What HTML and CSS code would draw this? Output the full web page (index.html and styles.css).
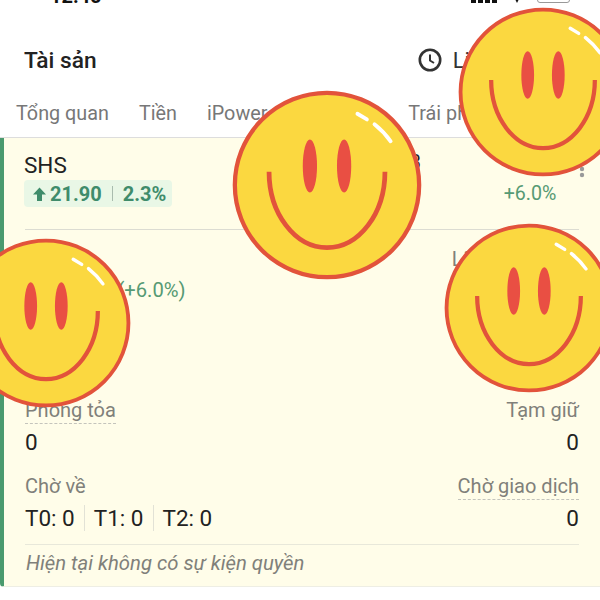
FILE: index.html
```html
<!DOCTYPE html>
<html lang="vi">
<head>
    <meta charset="UTF-8">
    <meta name="viewport" content="width=device-width, initial-scale=1.0">
    <title>Tài sản</title>
    <link rel="stylesheet" href="styles.css">
</head>
<body>
    <svg class="defs" width="0" height="0">
        <symbol id="smiley" viewBox="-100 -100 200 200">
            <circle r="97" fill="#fbd840" stroke="#e2533b" stroke-width="4.5"/>
            <ellipse cx="-18" cy="-20" rx="7.5" ry="28" fill="#e94f43"/>
            <ellipse cx="18" cy="-20" rx="7.5" ry="28" fill="#e94f43"/>
            <path d="M-61 -14 A61 80 0 0 0 61 -14" fill="none" stroke="#e2533b" stroke-width="5"/>
            <path d="M32 -75 L42 -69" stroke="#fff" stroke-width="4" stroke-linecap="round"/>
            <path d="M50 -64 Q60 -56 67 -46" fill="none" stroke="#fff" stroke-width="4" stroke-linecap="round"/>
        </symbol>
    </svg>

    <div class="screen">
        <div class="status-bar">
            <span class="clock">12:45</span>
            <div class="status-icons">
                <div class="signal"><i></i><i></i><i></i><i></i></div>
                <span class="wifi"></span>
                <span class="battery"></span>
            </div>
        </div>

        <header class="header">
            <h1>Tài sản</h1>
            <div class="history">
                <svg width="26" height="26" viewBox="0 0 26 26">
                    <circle cx="13" cy="13" r="10.2" fill="none" stroke="#333" stroke-width="2.6"/>
                    <path d="M13 7.5V13.5L17 16" fill="none" stroke="#333" stroke-width="2"/>
                </svg>
                <span>Lịch sử</span>
            </div>
        </header>

        <nav class="tabs">
            <span>Tổng quan</span>
            <span>Tiền</span>
            <span>iPower</span>
            <span>Phái sinh</span>
            <span>Trái phiếu</span>
        </nav>

        <section class="card">
            <div class="stock">
                <div class="stock-info">
                    <div class="symbol">SHS</div>
                    <div class="badge">
                        <svg width="13" height="14" viewBox="0 0 13 14">
                            <path d="M6.5 0.5L13 7.5H9V14H4V7.5H0Z" fill="#3f8c6b"/>
                        </svg>
                        <span>21.90</span>
                        <span class="badge-sep"></span>
                        <span>2.3%</span>
                    </div>
                </div>
                <div class="stock-qty">1,203</div>
                <div class="stock-price">
                    <div>23.2</div>
                    <div class="gain">+6.0%</div>
                </div>
                <svg class="kebab" width="6" height="18" viewBox="0 0 6 18">
                    <circle cx="3" cy="3" r="2.2" fill="#999"/>
                    <circle cx="3" cy="9" r="2.2" fill="#999"/>
                    <circle cx="3" cy="15" r="2.2" fill="#999"/>
                </svg>
            </div>

            <div class="row row-total">
                <div>
                    <div class="label">Tổng</div>
                    <div class="value">1,203,000 <span class="gain">(+6.0%)</span></div>
                </div>
                <div class="right">
                    <div class="label label-tight">Lãi/lỗ tạm tính</div>
                    <div class="value">+1,560</div>
                </div>
            </div>

            <div class="row row-blocked">
                <div>
                    <div class="label"><span class="dashed">Phong tỏa</span></div>
                    <div class="value value-gap">0</div>
                </div>
                <div class="right">
                    <div class="label">Tạm giữ</div>
                    <div class="value value-gap">0</div>
                </div>
            </div>

            <div class="row row-pending">
                <div>
                    <div class="label">Chờ về</div>
                    <div class="value value-gap settle">
                        <span>T0: 0</span><span>T1: 0</span><span>T2: 0</span>
                    </div>
                </div>
                <div class="right">
                    <div class="label"><span class="dashed">Chờ giao dịch</span></div>
                    <div class="value value-gap">0</div>
                </div>
            </div>

            <div class="note">Hiện tại không có sự kiện quyền</div>
        </section>
    </div>

    <svg class="smiley smiley-main"><use href="#smiley"/></svg>
    <svg class="smiley smiley-top"><use href="#smiley"/></svg>
    <svg class="smiley smiley-right"><use href="#smiley"/></svg>
    <svg class="smiley smiley-left"><use href="#smiley"/></svg>
</body>
</html>
```
FILE: styles.css
```css
html, body {
    margin: 0;
    height: 600px;
    overflow: hidden;
    background: white;
}

body {
    position: relative;
    font-family: Roboto, "Noto Sans", sans-serif;
    color: #222;
}

.defs {
    position: absolute;
}

.status-bar {
    height: 4px;
    overflow: hidden;
    display: flex;
    justify-content: space-between;
    align-items: flex-end;
    padding: 0 30px 0 50px;
}

.clock {
    font-size: 20px;
    font-weight: 700;
    line-height: 15px;
    color: #111;
}

.status-icons {
    display: flex;
    align-items: flex-end;
    gap: 16px;
}

.signal {
    display: flex;
    align-items: flex-end;
    gap: 2px;
    margin-bottom: 1px;
}

.signal i {
    display: block;
    width: 5px;
    height: 12px;
    background: #111;
}

.wifi {
    width: 8px;
    height: 8px;
    margin-bottom: 1px;
    background: #111;
    clip-path: polygon(0 0, 100% 0, 50% 100%);
}

.battery {
    width: 31px;
    height: 12px;
    border: 1px solid #999;
    border-radius: 3px;
    margin-bottom: 1px;
}

.header {
    margin-top: 20px;
    height: 72px;
    display: flex;
    align-items: center;
    justify-content: space-between;
    padding: 0 24px;
}

h1 {
    margin: 0;
    font-size: 22.7px;
    font-weight: 500;
    color: #222;
}

.history {
    display: flex;
    align-items: center;
    gap: 10px;
    font-size: 22px;
    color: #333;
    margin-right: 52px;
}

.tabs {
    display: flex;
    gap: 30px;
    height: 36px;
    padding: 0 16px 5px;
    font-size: 19.8px;
    line-height: 36px;
    color: #777;
    white-space: nowrap;
    overflow: hidden;
    border-bottom: 1px solid #ddd;
}

.card {
    height: 449px;
    box-sizing: border-box;
    background: #fffde9;
    border-left: 4px solid #4a9a6e;
    border-bottom: 1px solid #eeeee4;
    border-radius: 0 0 0 4px;
    padding: 0 21px;
}

.stock {
    display: grid;
    grid-template-columns: 1fr 120px 158px;
    height: 92px;
    box-sizing: border-box;
    padding-top: 15px;
    border-bottom: 1px solid #dcdcd2;
    position: relative;
}

.symbol {
    font-size: 22.5px;
    line-height: 24px;
    margin-left: -1px;
}

.badge {
    display: inline-flex;
    align-items: center;
    height: 27px;
    margin: 3px 0 0 -1px;
    padding: 0 6px 0 9px;
    background: #e9f7e6;
    border-radius: 4px;
    font-size: 20px;
    font-weight: 700;
    color: #3f8c6b;
}

.badge svg {
    margin-right: 4px;
}

.badge-sep {
    width: 1px;
    height: 15px;
    margin: 0 10px;
    background: #a9bcae;
}

.stock-qty {
    margin-top: -2px;
    font-size: 19.6px;
    line-height: 24px;
    text-align: right;
}

.stock-price {
    margin-top: -2px;
    text-align: center;
    font-size: 19.6px;
    line-height: 24px;
    padding-left: 60px;
}

.stock-price .gain {
    margin-top: 7px;
}

.gain {
    color: #569a74;
}

.kebab {
    position: absolute;
    top: 22px;
    right: -6px;
}

.row {
    display: flex;
    justify-content: space-between;
}

.right {
    text-align: right;
}

.row-total {
    margin-top: 17px;
}

.row-blocked {
    margin-top: 95px;
}

.row-pending {
    margin-top: 19px;
    padding-bottom: 13px;
    border-bottom: 1px solid #e8e8da;
}

.label {
    height: 24px;
    font-size: 20px;
    line-height: 24px;
    color: #80807a;
}

.label-tight {
    letter-spacing: -0.15px;
}

.dashed {
    display: inline-block;
    height: 25px;
    border-bottom: 1px dashed #c4c4bc;
}

.value {
    margin-top: 6px;
    font-size: 20.2px;
    line-height: 26px;
}

.value-gap {
    margin-top: 7px;
    font-size: 22.5px;
}

.settle {
    display: flex;
}

.settle span + span {
    margin-left: 9px;
    padding-left: 9px;
    border-left: 1px solid #e2e2d6;
}

.note {
    padding-top: 6px;
    font-size: 20.3px;
    line-height: 24px;
    font-style: italic;
    color: #80807a;
    margin-left: 1px;
}

.smiley {
    position: absolute;
    width: 170px;
    height: 170px;
}

.smiley-main {
    left: 232px;
    top: 90px;
    width: 190px;
    height: 190px;
}

.smiley-top {
    left: 458px;
    top: 7px;
}

.smiley-right {
    left: 444px;
    top: 223px;
}

.smiley-left {
    left: -39px;
    top: 238px;
}
```
